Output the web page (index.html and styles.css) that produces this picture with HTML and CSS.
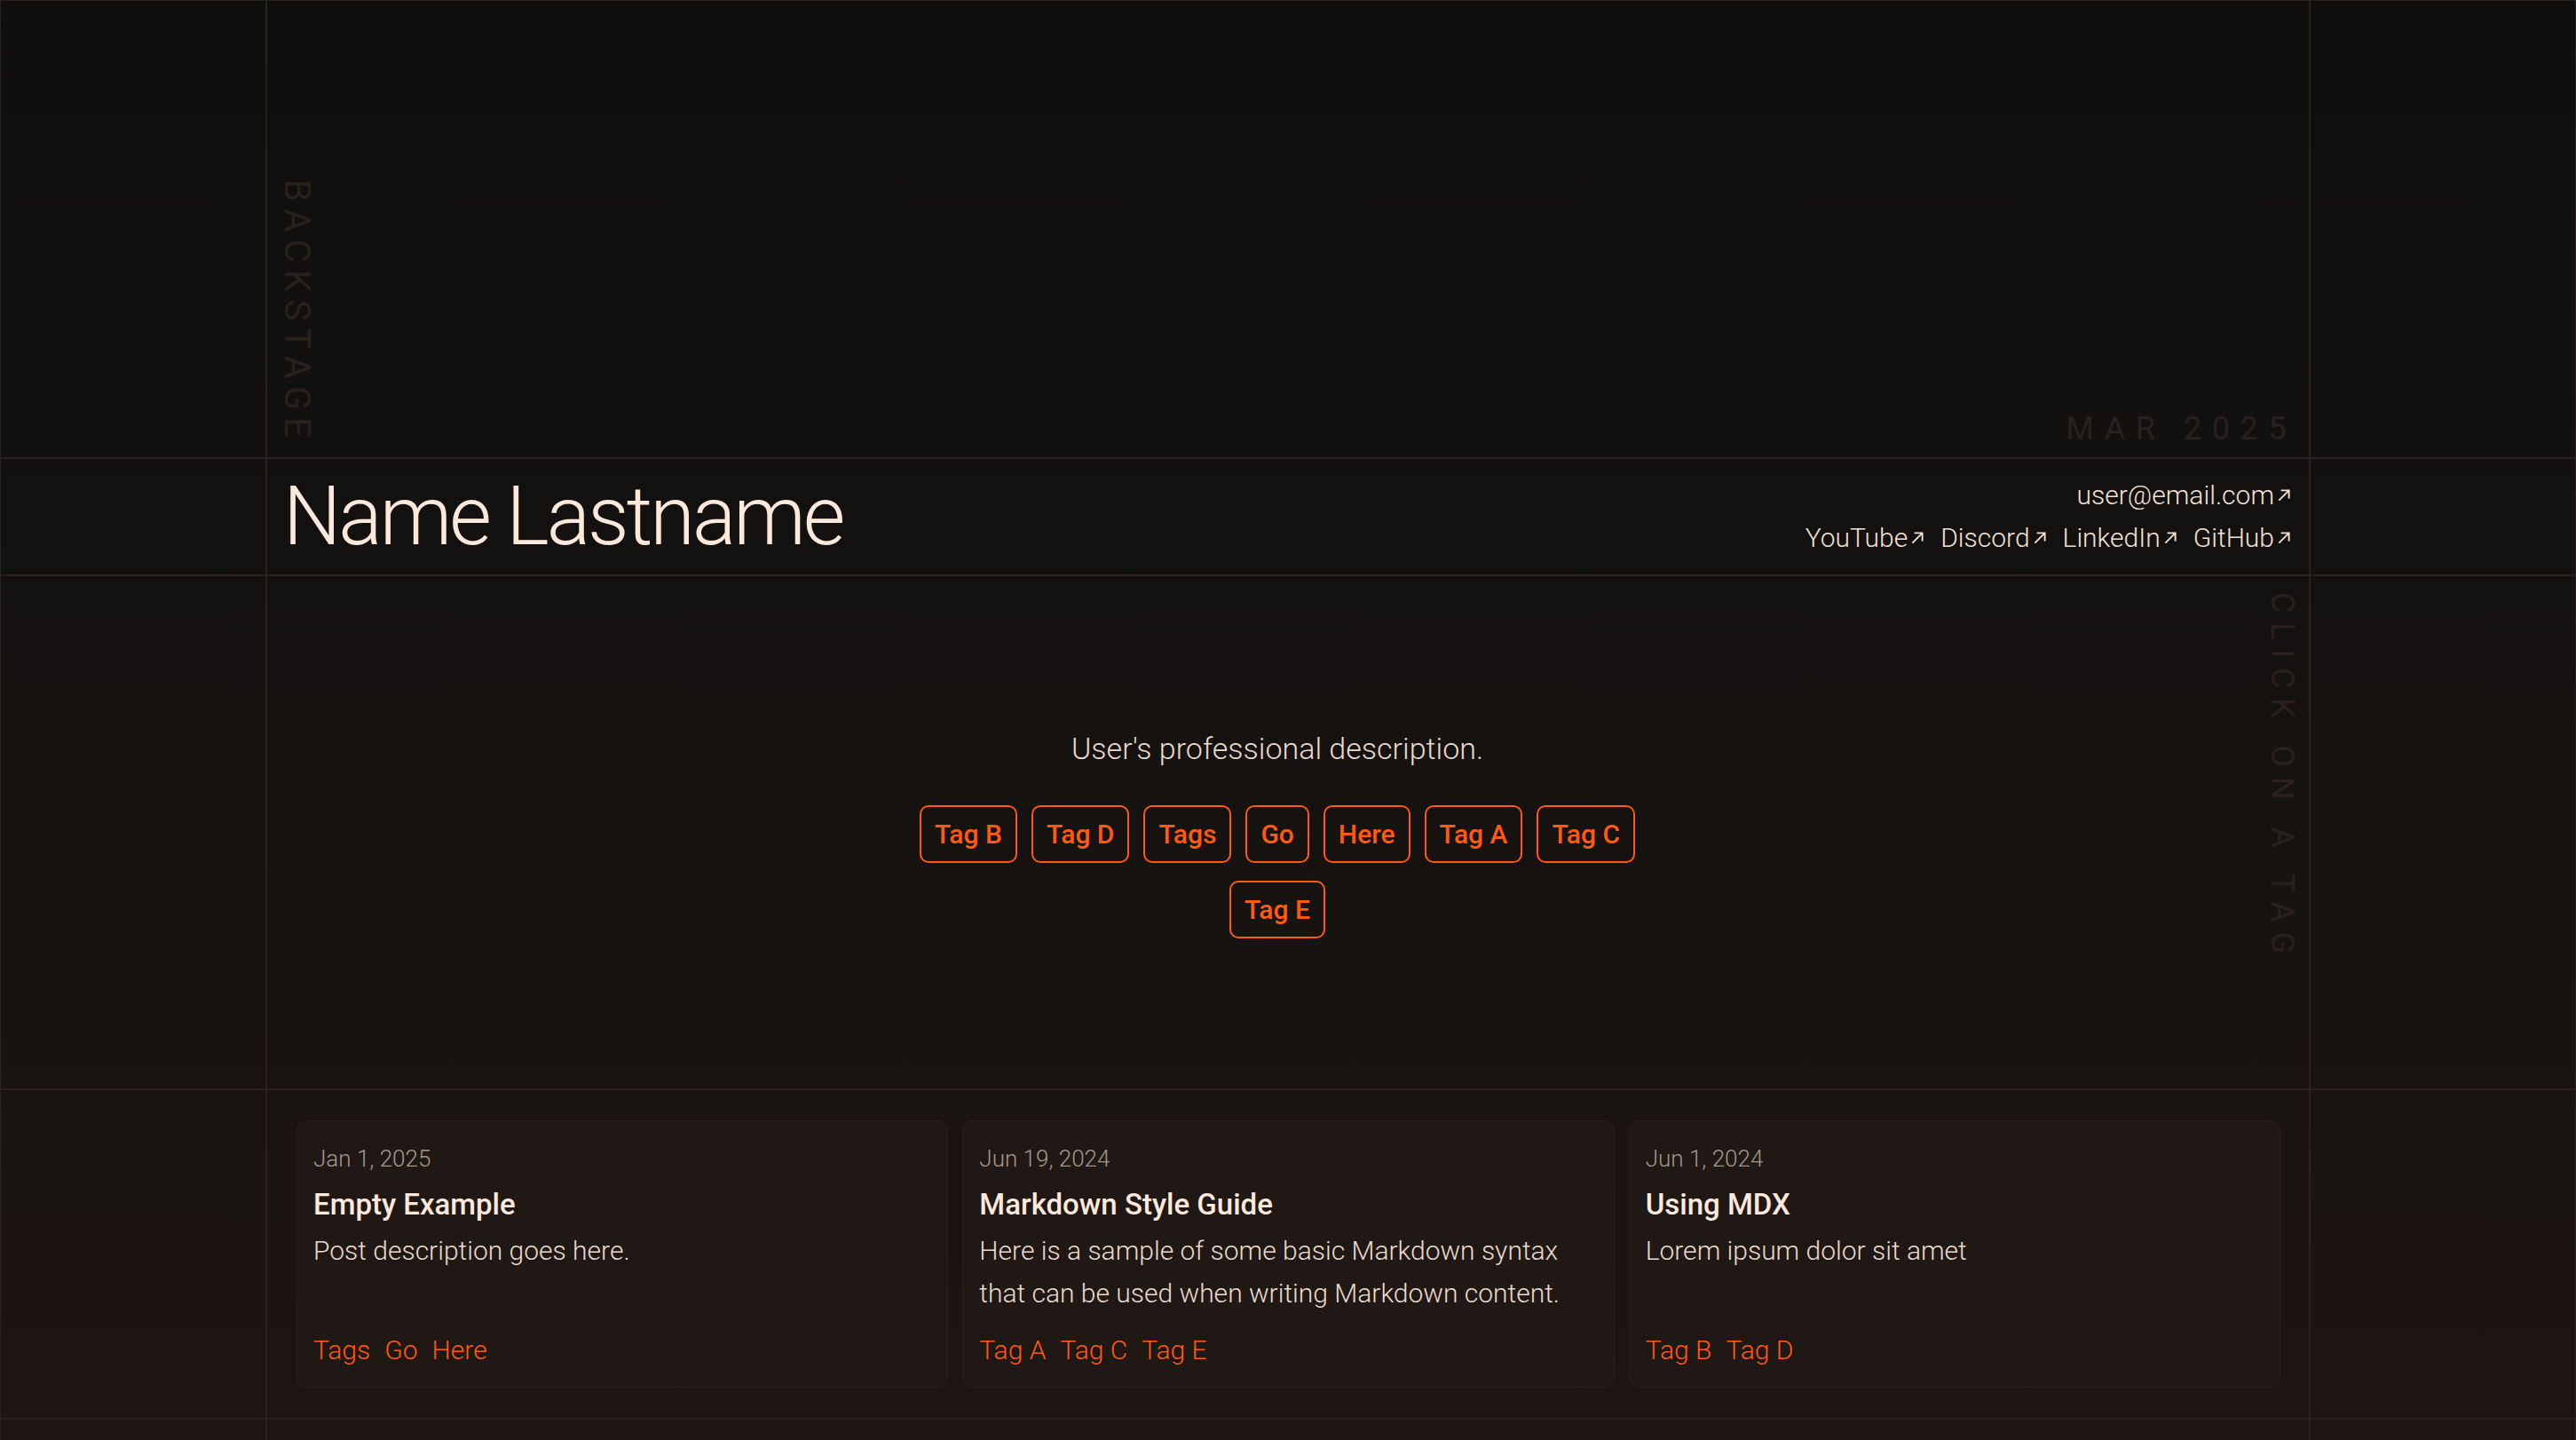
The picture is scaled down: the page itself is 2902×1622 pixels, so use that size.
FILE: index.html
```html
<!DOCTYPE html>
<html lang="en">
<head>
<meta charset="utf-8">
<title>Name Lastname</title>
<link rel="stylesheet" href="styles.css">
</head>
<body>
<div class="page">
  <div class="cell gutter"></div>
  <div class="cell hero">
    <span class="vlabel backstage">Backstage</span>
    <span class="stamp">Mar 2025</span>
  </div>
  <div class="cell gutter"></div>

  <div class="cell gutter"></div>
  <header class="cell header">
    <h1 class="name">Name Lastname</h1>
    <div class="contacts">
      <a class="link" href="#">user@email.com<svg class="arrow" viewBox="0 0 16 16"><path d="M3 13 L13 3 M5 3 H13 V11"/></svg></a>
      <div class="socials">
        <a class="link" href="#">YouTube<svg class="arrow" viewBox="0 0 16 16"><path d="M3 13 L13 3 M5 3 H13 V11"/></svg></a>
        <a class="link" href="#">Discord<svg class="arrow" viewBox="0 0 16 16"><path d="M3 13 L13 3 M5 3 H13 V11"/></svg></a>
        <a class="link" href="#">LinkedIn<svg class="arrow" viewBox="0 0 16 16"><path d="M3 13 L13 3 M5 3 H13 V11"/></svg></a>
        <a class="link" href="#">GitHub<svg class="arrow" viewBox="0 0 16 16"><path d="M3 13 L13 3 M5 3 H13 V11"/></svg></a>
      </div>
    </div>
  </header>
  <div class="cell gutter"></div>

  <div class="cell gutter"></div>
  <section class="cell intro">
    <div class="intro-main">
      <p class="desc">User's professional description.</p>
      <div class="tags">
        <a class="tag" href="#">Tag B</a>
        <a class="tag" href="#">Tag D</a>
        <a class="tag" href="#">Tags</a>
        <a class="tag" href="#">Go</a>
        <a class="tag" href="#">Here</a>
        <a class="tag" href="#">Tag A</a>
        <a class="tag" href="#">Tag C</a>
        <a class="tag" href="#">Tag E</a>
      </div>
    </div>
    <span class="vlabel click">Click on a tag</span>
  </section>
  <div class="cell gutter"></div>

  <div class="cell gutter"></div>
  <section class="cell posts">
    <article class="card">
      <div class="card-date">Jan 1, 2025</div>
      <h2 class="card-title">Empty Example</h2>
      <p class="card-desc">Post description goes here.</p>
      <div class="card-tags"><span>Tags</span><span>Go</span><span>Here</span></div>
    </article>
    <article class="card">
      <div class="card-date">Jun 19, 2024</div>
      <h2 class="card-title">Markdown Style Guide</h2>
      <p class="card-desc">Here is a sample of some basic Markdown syntax that can be used when writing Markdown content.</p>
      <div class="card-tags"><span>Tag A</span><span>Tag C</span><span>Tag E</span></div>
    </article>
    <article class="card">
      <div class="card-date">Jun 1, 2024</div>
      <h2 class="card-title">Using MDX</h2>
      <p class="card-desc">Lorem ipsum dolor sit amet</p>
      <div class="card-tags"><span>Tag B</span><span>Tag D</span></div>
    </article>
  </section>
  <div class="cell gutter"></div>

  <div class="cell gutter"></div>
  <footer class="cell footer"></footer>
  <div class="cell gutter"></div>
</div>
</body>
</html>
```

FILE: styles.css
```css
:root {
  --line: #29221d;
  --text: #fde8dc;
  --soft: #eadace;
  --muted: #a6978d;
  --accent: #ff5a0e;
  --faint: #28211d;
}

* { box-sizing: border-box; }

html, body { margin: 0; }

body {
  background: linear-gradient(180deg, #0f0f0e 0%, #121110 25%, #171311 55%, #1c1512 85%, #1d1613 100%);
  font-family: Roboto, "Noto Sans", sans-serif;
  color: var(--text);
}

a { color: inherit; text-decoration: none; }

.page {
  display: grid;
  grid-template-columns: 300px 1fr 300px;
  grid-template-rows: 516px 132px 579px auto 220px;
}

.cell { border: 1px solid var(--line); }

/* hero */
.hero {
  display: flex;
  justify-content: space-between;
  align-items: flex-end;
  padding: 0 14px 14px 13px;
}

.vlabel {
  writing-mode: vertical-rl;
  text-transform: uppercase;
  color: var(--faint);
  line-height: 1;
  font-weight: 400;
}

.backstage {
  font-size: 40px;
  letter-spacing: 0.21em;
}

.stamp {
  font-size: 36px;
  line-height: 1;
  letter-spacing: 0.32em;
  text-transform: uppercase;
  color: var(--faint);
}

/* header */
.header {
  display: flex;
  align-items: center;
  justify-content: space-between;
  padding: 0 19px 0 18px;
}

.name {
  margin: 0;
  font-size: 92px;
  font-weight: 300;
  line-height: 1;
  letter-spacing: -3px;
  color: var(--text);
}

.contacts {
  display: flex;
  flex-direction: column;
  align-items: flex-end;
  font-size: 30px;
  font-weight: 300;
  line-height: 48px;
  color: #f3e0d5;
}

.socials {
  display: flex;
  gap: 17px;
}

.link {
  display: inline-flex;
  align-items: center;
}

.arrow {
  width: 18px;
  height: 18px;
  margin-left: 2px;
  fill: none;
  stroke: currentColor;
  stroke-width: 1.7;
}

/* intro */
.intro {
  position: relative;
  display: flex;
  align-items: center;
  padding: 0 24px 0 0;
}

.intro-main {
  flex: 1;
  display: flex;
  flex-direction: column;
  align-items: center;
}

.desc {
  margin: 0 0 38px;
  font-size: 34px;
  font-weight: 300;
  line-height: 51px;
  color: var(--soft);
}

.tags {
  display: flex;
  flex-wrap: wrap;
  justify-content: center;
  gap: 20px 16px;
  max-width: 840px;
}

.tag {
  display: flex;
  align-items: center;
  height: 65px;
  padding: 0 15px;
  border: 2px solid var(--accent);
  border-radius: 10px;
  color: var(--accent);
  font-size: 30px;
  font-weight: 500;
}

.click {
  position: absolute;
  top: 18px;
  right: 12px;
  font-size: 36px;
  letter-spacing: 0.3em;
}

/* posts */
.posts {
  display: grid;
  grid-template-columns: repeat(3, 1fr);
  gap: 16px;
  padding: 34px 32px 34px 33px;
}

.card {
  display: flex;
  flex-direction: column;
  background: #201814;
  border: 1px solid #2a211c;
  border-radius: 12px;
  padding: 24px 18px 23px;
}

.card-date {
  font-size: 26px;
  font-weight: 300;
  line-height: 36px;
  color: var(--muted);
}

.card-title {
  margin: 12px 0 0;
  font-size: 33px;
  font-weight: 500;
  line-height: 44px;
  color: var(--text);
}

.card-desc {
  margin: 6px 0 0;
  font-size: 30px;
  font-weight: 300;
  line-height: 48px;
  color: var(--soft);
}

.card-tags {
  margin-top: auto;
  padding-top: 22px;
  display: flex;
  gap: 16px;
  font-size: 30px;
  font-weight: 300;
  line-height: 36px;
  color: var(--accent);
}
```
